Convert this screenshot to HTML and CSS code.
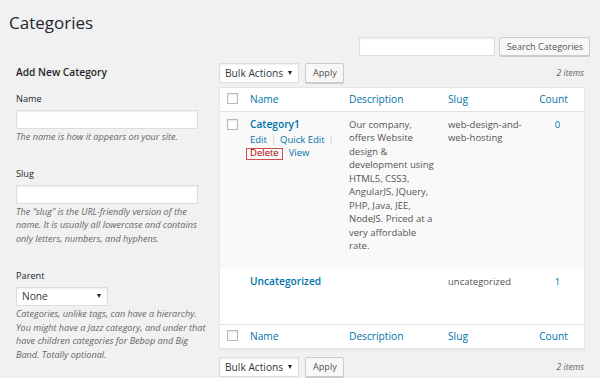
FILE: index.html
```html
<!DOCTYPE html>
<html lang="en">
<head>
<meta charset="utf-8">
<title>Categories</title>
<link rel="stylesheet" href="styles.css">
</head>
<body>
<div class="wrap">
  <h1 class="page-title">Categories</h1>
  <form class="search-box">
    <input type="search" class="search-input" aria-label="Search Categories">
    <button type="button" class="button">Search Categories</button>
  </form>
  <div class="cols">
    <div class="col-left">
      <h2 class="form-title">Add New Category</h2>
      <div class="form-field">
        <label class="label">Name</label>
        <input type="text" class="text-input">
        <p class="description">The name is how it appears on your site.</p>
      </div>
      <div class="form-field">
        <label class="label">Slug</label>
        <input type="text" class="text-input">
        <p class="description">The “slug” is the URL-friendly version of the name. It is usually all lowercase and contains only letters, numbers, and hyphens.</p>
      </div>
      <div class="form-field">
        <label class="label">Parent</label>
        <div class="select parent-select"><span>None</span></div>
        <p class="description">Categories, unlike tags, can have a hierarchy. You might have a Jazz category, and under that have children categories for Bebop and Big Band. Totally optional.</p>
      </div>
    </div>
    <div class="col-right">
      <div class="tablenav">
        <div class="select bulk-select"><span>Bulk Actions</span></div>
        <button type="button" class="button">Apply</button>
        <span class="items">2 items</span>
      </div>
      <table class="list">
        <colgroup>
          <col class="w-cb"><col class="w-name"><col class="w-desc"><col class="w-slug"><col class="w-count">
        </colgroup>
        <thead>
          <tr>
            <th class="cb"><span class="checkbox"></span></th>
            <th><a>Name</a></th>
            <th><a>Description</a></th>
            <th><a>Slug</a></th>
            <th class="c-count"><a>Count</a></th>
          </tr>
        </thead>
        <tbody>
          <tr class="r1">
            <td class="cb"><span class="checkbox"></span></td>
            <td>
              <a class="row-title">Category1</a>
              <div class="row-actions">
                <span class="line"><a>Edit</a><span class="sep">|</span><a>Quick Edit</a><span class="sep">|</span></span>
                <span class="line"><a class="delete">Delete</a><a class="view">View</a></span>
              </div>
            </td>
            <td>Our company, offers Website design &amp; development using HTML5, CSS3, AngularJS, JQuery, PHP, Java, JEE, NodeJS. Priced at a very affordable rate.</td>
            <td>web-design-and-web-hosting</td>
            <td class="c-count"><a>0</a></td>
          </tr>
          <tr class="r2">
            <td class="cb"></td>
            <td><a class="row-title">Uncategorized</a></td>
            <td></td>
            <td>uncategorized</td>
            <td class="c-count"><a>1</a></td>
          </tr>
        </tbody>
        <tfoot>
          <tr>
            <th class="cb"><span class="checkbox"></span></th>
            <th><a>Name</a></th>
            <th><a>Description</a></th>
            <th><a>Slug</a></th>
            <th class="c-count"><a>Count</a></th>
          </tr>
        </tfoot>
      </table>
      <div class="tablenav bottom">
        <div class="select bulk-select"><span>Bulk Actions</span></div>
        <button type="button" class="button">Apply</button>
        <span class="items">2 items</span>
      </div>
    </div>
  </div>
</div>
</body>
</html>
```

FILE: styles.css
```css
* { box-sizing: border-box; }
html, body { margin: 0; padding: 0; }
body {
  width: 600px;
  height: 378px;
  overflow: hidden;
  background: #f1f1f1;
  font-family: "Open Sans", "Noto Sans", "Liberation Sans", sans-serif;
  color: #444;
}
.wrap { padding: 11px 10px 0 9px; }
.page-title {
  margin: 0;
  font-size: 17px;
  line-height: 23px;
  font-weight: 400;
  color: #23282d;
}
.search-box {
  display: flex;
  justify-content: flex-end;
  gap: 4px;
  margin: 3px 0 0;
}
.search-input {
  width: 136px;
  height: 19px;
  margin: 0;
  border: 1px solid #ddd;
  background: #fff;
  box-shadow: inset 0 1px 2px rgba(0,0,0,.07);
}
.button {
  height: 19px;
  margin: 0;
  padding: 0 6px 0 7px;
  font-family: inherit;
  font-size: 9.1px;
  line-height: 17px;
  color: #555;
  background: #f7f7f7;
  border: 1px solid #ccc;
  border-radius: 2px;
  box-shadow: 0 1px 0 #ccc;
  white-space: nowrap;
}
.cols {
  display: flex;
  align-items: flex-start;
  margin-top: 7px;
}
.col-left { width: 196px; margin-left: 7px; }
.col-right { width: 366px; margin-left: 7px; }

.form-title {
  margin: 1px 0 0;
  font-size: 10.2px;
  line-height: 16px;
  font-weight: 600;
  color: #23282d;
}
.form-field { margin-top: 24px; }
.form-title + .form-field { margin-top: 13px; }
.label {
  display: block;
  font-size: 9.2px;
  line-height: 12px;
  color: #23282d;
  margin-bottom: 5px;
}
.text-input {
  display: block;
  width: 182px;
  height: 19px;
  margin: 0;
  border: 1px solid #ddd;
  background: #fff;
  box-shadow: inset 0 1px 2px rgba(0,0,0,.07);
}
.description {
  margin: 1px 0 0;
  font-size: 9.1px;
  line-height: 13.7px;
  font-style: italic;
  color: #666;
}
.select {
  display: flex;
  align-items: center;
  justify-content: space-between;
  height: 20px;
  padding: 0 6px 0 5px;
  background: #fff;
  border: 1px solid #ddd;
  box-shadow: inset 0 1px 2px rgba(0,0,0,.07);
  font-size: 10.2px;
  color: #32373c;
}
.select::after {
  content: "";
  border-left: 2.5px solid transparent;
  border-right: 2.5px solid transparent;
  border-top: 4px solid #222;
  margin-top: -1px;
}
.parent-select { width: 92px; height: 19px; }
.bulk-select { width: 80px; }

.tablenav {
  display: flex;
  align-items: center;
  height: 20px;
}
.tablenav .button { height: 20px; margin-left: 6px; line-height: 18px; }
.tablenav.bottom { margin-top: 8px; }
.items {
  margin-left: auto;
  margin-right: 1px;
  font-size: 8.6px;
  font-style: italic;
  color: #666;
}

.list {
  width: 366px;
  margin-top: 4px;
  table-layout: fixed;
  border-collapse: separate;
  border-spacing: 0;
  background: #fff;
  border: 1px solid #e5e5e5;
  box-shadow: 0 1px 1px rgba(0,0,0,.04);
}
.w-cb { width: 24px; }
.w-name { width: 99px; }
.w-desc { width: 99px; }
.w-slug { width: 89px; }
.w-count { width: 53px; }
.list a { color: #0073aa; text-decoration: none; }
.list th {
  text-align: left;
  font-weight: 400;
  font-size: 10.2px;
  line-height: 14px;
  padding: 4px 6px 5px;
  vertical-align: top;
}
.list thead th { border-bottom: 1px solid #e1e1e1; }
.list tfoot th { border-top: 1px solid #e1e1e1; }
.list th.cb { padding: 5px 0 0 7px; }
.list td {
  vertical-align: top;
  padding: 6px 6px 0;
  font-size: 9.5px;
  line-height: 13.44px;
  color: #555;
}
.list td.cb { padding: 7px 0 0 7px; }
.list th.c-count { text-align: center; padding-right: 14px; }
.list td.c-count { text-align: center; }
.r1 { height: 157px; background: #f9f9f9; }
.r2 { height: 55px; }
.checkbox {
  display: block;
  width: 11px;
  height: 11px;
  background: #fff;
  border: 1px solid #b4b9be;
  box-shadow: inset 0 1px 2px rgba(0,0,0,.1);
}
.row-title {
  display: block;
  font-size: 10.2px;
  line-height: 12.5px;
  font-weight: 600;
}
.row-actions { margin-top: 2.4px; }
.row-actions .line { display: block; line-height: 13.4px; white-space: nowrap; }
.sep { color: #ccc; margin: 0 4px; }
.list a.delete {
  display: inline-block;
  color: #a00;
  line-height: 8px;
  padding: 0 3px 2px 3px;
  margin-left: -4px;
  border: 1px solid #d54e4e;
}
.view { margin-left: 6px; }
```
